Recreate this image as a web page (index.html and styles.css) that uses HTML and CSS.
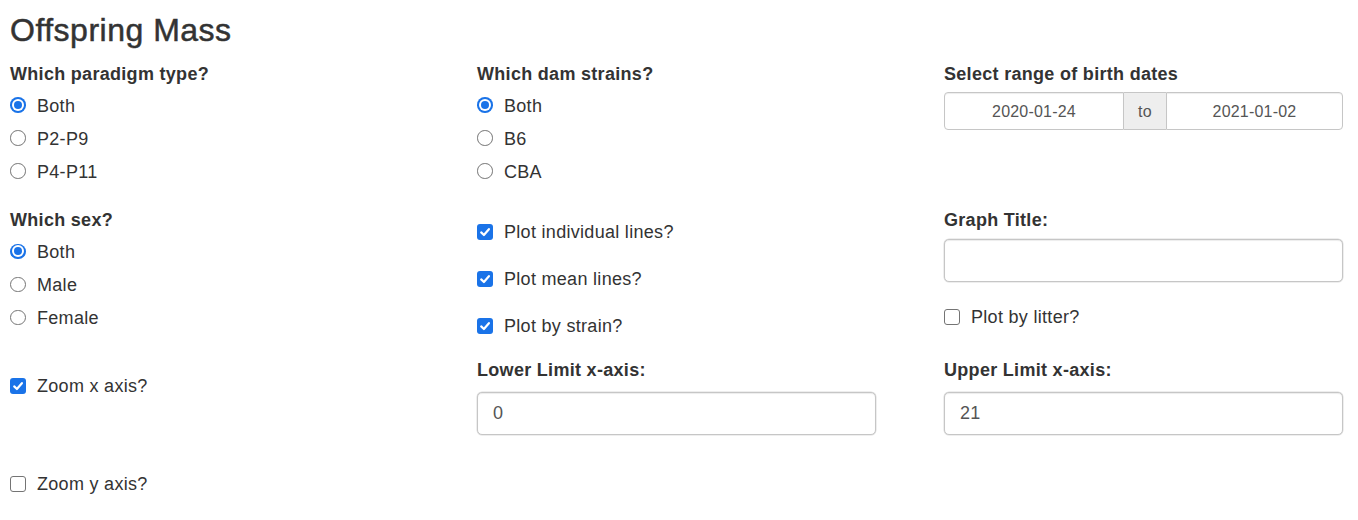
FILE: index.html
```html
<!DOCTYPE html>
<html lang="en">
<head>
<meta charset="utf-8">
<title>Offspring Mass</title>
<link rel="stylesheet" href="styles.css">
</head>
<body>
<div class="page">
  <h3 class="title">Offspring Mass</h3>
  <div class="grid">
    <!-- Row 1 -->
    <div class="cell">
      <span class="label">Which paradigm type?</span>
      <div class="opts">
        <label class="opt"><span class="radio on"></span>Both</label>
        <label class="opt"><span class="radio"></span>P2-P9</label>
        <label class="opt"><span class="radio"></span>P4-P11</label>
      </div>
    </div>
    <div class="cell">
      <span class="label">Which dam strains?</span>
      <div class="opts">
        <label class="opt"><span class="radio on"></span>Both</label>
        <label class="opt"><span class="radio"></span>B6</label>
        <label class="opt"><span class="radio"></span>CBA</label>
      </div>
    </div>
    <div class="cell">
      <span class="label">Select range of birth dates</span>
      <div class="daterange">
        <input class="date first" type="text" value="2020-01-24">
        <span class="addon">to</span>
        <input class="date last" type="text" value="2021-01-02">
      </div>
    </div>

    <!-- Row 2 -->
    <div class="cell">
      <span class="label">Which sex?</span>
      <div class="opts sex">
        <label class="opt"><span class="radio on"></span>Both</label>
        <label class="opt"><span class="radio"></span>Male</label>
        <label class="opt"><span class="radio"></span>Female</label>
      </div>
    </div>
    <div class="cell checks">
      <label class="check"><span class="box on"><svg viewBox="0 0 16 16"><path d="M4.2 8.4 L6.9 11 L11.9 5.2"/></svg></span>Plot individual lines?</label>
      <label class="check"><span class="box on"><svg viewBox="0 0 16 16"><path d="M4.2 8.4 L6.9 11 L11.9 5.2"/></svg></span>Plot mean lines?</label>
      <label class="check"><span class="box on"><svg viewBox="0 0 16 16"><path d="M4.2 8.4 L6.9 11 L11.9 5.2"/></svg></span>Plot by strain?</label>
    </div>
    <div class="cell">
      <span class="label">Graph Title:</span>
      <input class="field title-field" type="text" value="">
      <label class="check litter"><span class="box"></span>Plot by litter?</label>
    </div>

    <!-- Row 3 -->
    <div class="cell">
      <label class="check zoomx"><span class="box on"><svg viewBox="0 0 16 16"><path d="M4.2 8.4 L6.9 11 L11.9 5.2"/></svg></span>Zoom x axis?</label>
    </div>
    <div class="cell">
      <span class="label">Lower Limit x-axis:</span>
      <input class="field limit" type="text" value="0">
    </div>
    <div class="cell">
      <span class="label">Upper Limit x-axis:</span>
      <input class="field limit" type="text" value="21">
    </div>

    <!-- Row 4 -->
    <div class="cell">
      <label class="check zoomy"><span class="box"></span>Zoom y axis?</label>
    </div>
  </div>
</div>
</body>
</html>
```

FILE: styles.css
```css
html, body {
  margin: 0;
  padding: 0;
  background: #ffffff;
}

body {
  font-family: "Liberation Sans", Arial, sans-serif;
  font-size: 18px;
  letter-spacing: 0.3px;
  color: #333333;
  overflow: hidden;
}

.page {
  padding: 13px 0 0 10px;
}

.title {
  margin: 0 0 13px;
  font-size: 32px;
  line-height: 35px;
  font-weight: 400;
  letter-spacing: 0.5px;
  color: #333333;
  -webkit-text-stroke: 0.5px #333333;
}

.grid {
  display: grid;
  grid-template-columns: 467px 467px 1fr;
  row-gap: 18.5px;
  align-items: start;
}

.cell {
  display: flex;
  flex-direction: column;
  align-items: flex-start;
}

.label {
  display: block;
  font-weight: bold;
  line-height: 26px;
}

.opts {
  display: flex;
  flex-direction: column;
  margin-top: 2.6px;
}

.opts.sex {
  margin-top: 2.8px;
}

.opt {
  display: flex;
  align-items: center;
  height: 33px;
  line-height: 33px;
}

.radio {
  box-sizing: border-box;
  width: 15.5px;
  height: 15.5px;
  border: 1.6px solid #747474;
  border-radius: 50%;
  margin-right: 11.5px;
  margin-bottom: 2px;
  background: #ffffff;
  display: flex;
  align-items: center;
  justify-content: center;
}

.radio.on {
  border: none;
  background: #1a73e8;
}

.radio.on::after {
  content: "";
  width: 8px;
  height: 8px;
  border-radius: 50%;
  background: #1a73e8;
  box-shadow: 0 0 0 2px #ffffff;
}

.check {
  display: flex;
  align-items: center;
  height: 26px;
  line-height: 26px;
}

.box {
  box-sizing: border-box;
  width: 16px;
  height: 16px;
  border: 1.6px solid #747474;
  border-radius: 3px;
  margin-right: 11px;
  background: #ffffff;
  display: flex;
}

.box.on {
  border: none;
  background: #1a73e8;
}

.box svg {
  width: 16px;
  height: 16px;
}

.box svg path {
  fill: none;
  stroke: #ffffff;
  stroke-width: 2.2;
  stroke-linecap: round;
  stroke-linejoin: round;
}

.checks {
  padding-top: 12.3px;
  gap: 20.7px;
}

.litter {
  margin-top: 22.3px;
}

.zoomx {
  margin-top: 16px;
}

.zoomy {
  margin-top: 17.8px;
}

.field {
  box-sizing: border-box;
  width: 399px;
  height: 43.5px;
  padding: 0 15px;
  border: 1px solid #c6c6c6;
  border-radius: 5px;
  box-shadow: inset 0 1px 1px rgba(0, 0, 0, 0.075), 0 0 0 0.5px #dddddd;
  font-family: "Liberation Sans", Arial, sans-serif;
  font-size: 18px;
  letter-spacing: 0.3px;
  color: #555555;
  background: #ffffff;
  outline: none;
}

.title-field {
  margin-top: 5.5px;
}

.limit {
  margin-top: 8.3px;
}

.daterange {
  display: flex;
  margin-top: 5px;
  width: 399px;
  height: 38px;
}

.date {
  box-sizing: border-box;
  height: 38px;
  margin: 0;
  padding: 2px 6px 0;
  border: 1px solid #c6c6c6;
  box-shadow: inset 0 1px 1px rgba(0, 0, 0, 0.075);
  font-family: "Liberation Sans", Arial, sans-serif;
  font-size: 16px;
  letter-spacing: 0.2px;
  color: #555555;
  text-align: center;
  background: #ffffff;
  outline: none;
}

.date.first {
  width: 180px;
  border-radius: 4px 0 0 4px;
}

.date.last {
  width: 177px;
  border-radius: 0 4px 4px 0;
}

.addon {
  box-sizing: border-box;
  width: 44px;
  height: 38px;
  padding-top: 2px;
  display: flex;
  align-items: center;
  justify-content: center;
  background: #eeeeee;
  border-top: 1px solid #c6c6c6;
  border-bottom: 1px solid #c6c6c6;
  font-size: 16px;
  color: #555555;
}
```
